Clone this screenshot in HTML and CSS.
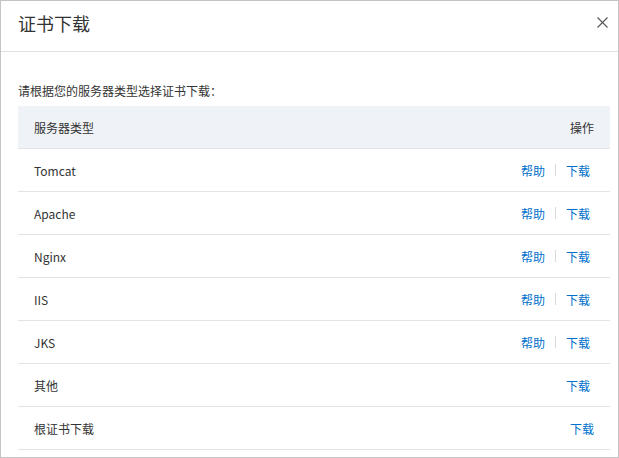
FILE: index.html
```html
<!DOCTYPE html>
<html lang="zh">
<head>
<meta charset="utf-8">
<link rel="stylesheet" href="styles.css">
</head>
<body>
<div class="dialog">
  <div class="dialog-header">
    <span class="dialog-title">证书下载</span>
    <span class="close" aria-label="close">
      <svg width="11" height="11" viewBox="0 0 11 11"><path d="M0.5 0.5 L10.5 10.5 M10.5 0.5 L0.5 10.5" stroke="#555" stroke-width="1.1" fill="none"/></svg>
    </span>
  </div>
  <div class="dialog-body">
    <p class="desc">请根据您的服务器类型选择证书下载：</p>
    <div class="table">
      <div class="row head"><span>服务器类型</span><span class="ops">操作</span></div>
      <div class="row"><span>Tomcat</span><span class="ops"><a>帮助</a><i class="sep"></i><a>下载</a></span></div>
      <div class="row"><span>Apache</span><span class="ops"><a>帮助</a><i class="sep"></i><a>下载</a></span></div>
      <div class="row"><span>Nginx</span><span class="ops"><a>帮助</a><i class="sep"></i><a>下载</a></span></div>
      <div class="row"><span>IIS</span><span class="ops"><a>帮助</a><i class="sep"></i><a>下载</a></span></div>
      <div class="row"><span>JKS</span><span class="ops"><a>帮助</a><i class="sep"></i><a>下载</a></span></div>
      <div class="row"><span>其他</span><span class="ops"><a>下载</a></span></div>
      <div class="row"><span>根证书下载</span><span class="ops last"><a>下载</a></span></div>
    </div>
  </div>
</div>
</body>
</html>
```
FILE: styles.css
```css
html, body { margin: 0; padding: 0; background: #fff; }
body {
  font-family: "Noto Sans CJK SC", "Open Sans", "Liberation Sans", sans-serif;
  color: #333;
}
.dialog {
  width: 619px;
  height: 458px;
  box-sizing: border-box;
  border: 1px solid #c4c4c4;
  background: #fff;
  overflow: hidden;
}
.dialog-header {
  height: 50px;
  border-bottom: 1px solid #e1e1e1;
  display: flex;
  align-items: center;
  justify-content: space-between;
  padding: 0 10px 0 17px;
}
.dialog-title {
  font-size: 18px;
  color: #333;
  line-height: 24px;
  margin-top: -7px;
}
.close { display: flex; margin-top: -7px; }
.dialog-body { padding: 0 8px 0 17px; }
.desc {
  margin: 0;
  padding-top: 29px;
  font-size: 12px;
  line-height: 20px;
  height: 25px;
  color: #333;
}
.table { display: flex; flex-direction: column; }
.row {
  height: 42px;
  border-bottom: 1px solid #e3e3e3;
  display: flex;
  align-items: center;
  justify-content: space-between;
  padding: 0 16px;
  font-size: 12px;
  color: #333;
}
.row.head { background: #eff2f6; height: 42px; }
.ops { display: flex; align-items: center; padding-right: 4px; }
.row.head .ops { padding-right: 0; }
.ops.last { padding-right: 0; }
.ops a { color: #0070cc; cursor: pointer; }
.sep {
  width: 1px;
  height: 12px;
  background: #d9d9d9;
  margin: 0 10px;
}
```
